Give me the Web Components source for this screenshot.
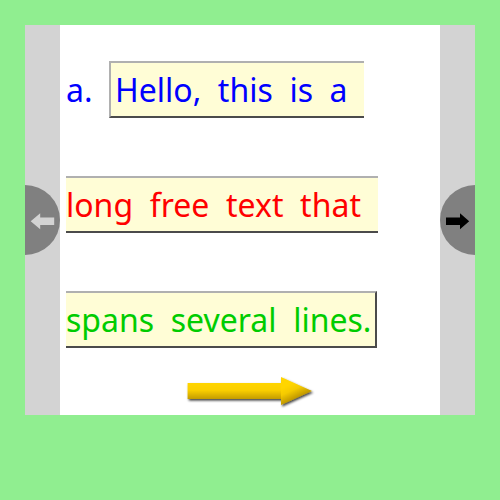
<!DOCTYPE html>
<html lang="en"><head><meta charset="utf-8"><title>Free text</title>
<style>
html,body{margin:0;height:100%}
body{background:#90ee90;overflow:hidden;font-family:"Noto Sans","Open Sans",sans-serif}
</style></head><body>
<lesson-viewer></lesson-viewer>
<script>
class TextLine extends HTMLElement{
 connectedCallback(){
  this.attachShadow({mode:'open'}).innerHTML=`<style>
  :host{display:flex;height:57px;align-items:center;white-space:pre;font-size:32px;line-height:45px;color:var(--ink)}
  .label{width:43px;flex:none}
  .box{box-sizing:border-box;width:var(--w);height:57px;flex:none;padding:4px 0;background:#fffdd6;border-style:solid;border-width:2px 0;border-color:#b0b0b0 #4b4b4b #4b4b4b #b0b0b0;word-spacing:var(--gap,8.32px)}
  :host([start]) .box{border-left-width:2px;padding-left:4px}
  :host([end]) .box{border-right-width:2px}
  </style>${this.hasAttribute('label')?`<span class="label">${this.getAttribute('label')}</span>`:''}<div class="box"><slot></slot></div>`;
 }}
customElements.define('text-line',TextLine);
class PageButton extends HTMLElement{
 connectedCallback(){
  const prev=this.hasAttribute('prev');
  this.attachShadow({mode:'open'}).innerHTML=`<style>
  :host{display:flex;width:35px;height:390px;background:#d3d3d3;align-items:center;flex:none}
  button{all:unset;display:block;width:35px;height:70px;background:#808080;border-radius:${prev?'0 35px 35px 0':'35px 0 0 35px'}}
  svg{display:block}
  </style><button aria-label="${prev?'Previous':'Next'}"><svg width="35" height="70" viewBox="0 0 35 70">${prev?
  '<path fill="#d3d3d3" d="M5.7 36.3L15.2 28.3V32.5H29.2V40H15.2V44.2Z"/>':
  '<path fill="#000" d="M29.2 36.3L20 28.3V32.5H6V40H20V44.2Z"/>'}</svg></button>`;
 }}
customElements.define('page-button',PageButton);
class GoldArrow extends HTMLElement{
 connectedCallback(){
  this.attachShadow({mode:'open'}).innerHTML=`<style>:host{display:block;width:130px;height:36px}svg{display:block}</style>
  <svg width="130" height="36" viewBox="0 0 130 36"><defs>
  <linearGradient id="g" x1="0" y1="8" x2="0" y2="25" gradientUnits="userSpaceOnUse"><stop offset="0" stop-color="#ffd500"/><stop offset=".42" stop-color="#fbcf00"/><stop offset="1" stop-color="#bd9600"/></linearGradient>
  <linearGradient id="h" x1="101" y1="11" x2="108" y2="26" gradientUnits="userSpaceOnUse"><stop offset="0" stop-color="#ffd500"/><stop offset=".4" stop-color="#f5ca00"/><stop offset="1" stop-color="#b89000"/></linearGradient>
  <filter id="s" x="-5%" y="-20%" width="112%" height="150%"><feDropShadow dx="1.2" dy="1.6" stdDeviation="1.1" flood-color="#000" flood-opacity=".75"/></filter></defs>
  <g filter="url(#s)"><path fill="url(#g)" d="M2.6 8.1H96V24.1H2.6Z"/><path fill="url(#h)" d="M96 2L127 16L96 30Z"/></g></svg>`;
 }}
customElements.define('gold-arrow',GoldArrow);
class LessonViewer extends HTMLElement{
 connectedCallback(){
  this.attachShadow({mode:'open'}).innerHTML=`<style>
  :host{display:block;padding:25px}
  .frame{display:flex;width:450px;height:390px;background:#fff}
  main{flex:1;box-sizing:border-box;padding:36px 0 0 6px;min-width:0}
  .lines{display:grid;gap:58px}
  gold-arrow{margin:27px 0 0 119px}
  </style><div class="frame"><page-button prev></page-button><main><div class="lines">
  <text-line label="a." start style="--ink:#00f;--w:255px">Hello, this is a</text-line>
  <text-line style="--ink:#f00;--w:312px">long free text that</text-line>
  <text-line end style="--ink:#0c0;--w:311px">spans several lines.</text-line>
  </div><gold-arrow></gold-arrow></main><page-button></page-button></div>`;
 }}
customElements.define('lesson-viewer',LessonViewer);
</script></body></html>
